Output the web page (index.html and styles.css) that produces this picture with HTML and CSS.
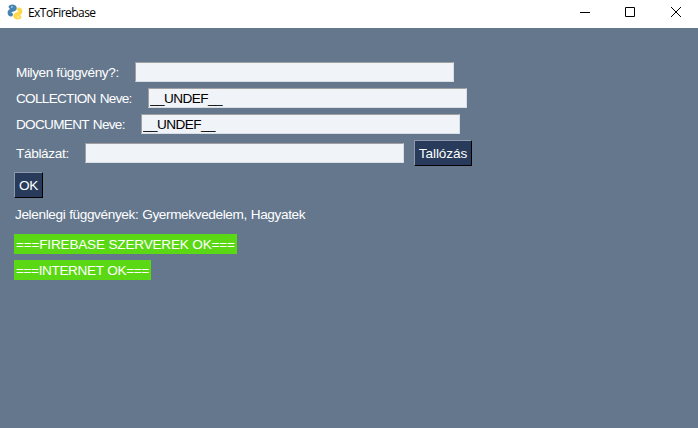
FILE: index.html
```
<!DOCTYPE html>
<html lang="hu">
<head>
<meta charset="utf-8">
<title>ExToFirebase</title>
<link rel="stylesheet" href="styles.css">
</head>
<body>
<header class="titlebar">
  <svg class="logo" width="16" height="16" viewBox="0 0 16 16">
    <g fill="none" stroke-linecap="round" stroke-linejoin="round" stroke-width="3.8">
      <path stroke="#4583b0" d="M3.5 2.9C5.2 2 8 2.4 7.8 4.5 7.6 6.4 2.4 5.7 2.5 8.4c0 1.4.8 2 1.6 2.2"/>
      <path stroke="#ffd84a" d="M12.5 13.1c-1.7.9-4.5.5-4.3-1.6.2-1.9 5.4-1.2 5.3-3.9 0-1.4-.8-2-1.6-2.2"/>
    </g>
    <circle cx="4.9" cy="3" r=".7" fill="#fff"/>
    <circle cx="11.1" cy="13" r=".7" fill="#fff"/>
  </svg>
  <h1 class="title">ExToFirebase</h1>
  <div class="controls">
    <svg width="46" height="24" viewBox="0 0 46 24"><path d="M18 12.5h10" stroke="#000"/></svg>
    <svg width="46" height="24" viewBox="0 0 46 24"><path d="M17.5 7.5h9v9h-9z" fill="none" stroke="#000"/></svg>
    <svg width="44" height="24" viewBox="0 0 44 24"><path d="M17 7l10 10M27 7L17 17" stroke="#000"/></svg>
  </div>
</header>
<main class="form">
  <div class="row"><label class="label function" for="f">Milyen függvény?:</label><input class="field" id="f"></div>
  <div class="row"><label class="label collection" for="c">COLLECTION Neve:</label><input class="field" id="c" value="__UNDEF__"></div>
  <div class="row"><label class="label document" for="d">DOCUMENT Neve:</label><input class="field" id="d" value="__UNDEF__"></div>
  <div class="row"><label class="label table" for="t">Táblázat:</label><input class="field" id="t"><button class="button browse">Tallózás</button></div>
  <div class="row"><button class="button ok">OK</button></div>
  <p class="functions">Jelenlegi függvények: Gyermekvedelem, Hagyatek</p>
  <p class="status firebase">===FIREBASE SZERVEREK OK===</p>
  <p class="status internet">===INTERNET OK===</p>
</main>
</body>
</html>
```
FILE: styles.css
```
* { box-sizing: border-box; }
body {
  margin: 0;
  height: 428px;
  overflow: hidden;
  background: #64778d;
  color: #fff;
  font: 13.6px/20px "Liberation Sans", Arial, sans-serif;
}
.titlebar {
  display: flex;
  height: 28px;
  padding: 0 0 4px 7px;
  align-items: center;
  background: #fff;
  color: #000;
}
.logo { flex: none; }
.title {
  margin: 2px 0 0 5px;
  font: 12px/16px "Open Sans", "Noto Sans", sans-serif;
  letter-spacing: -0.55px;
}
.controls { display: flex; margin-left: auto; }
.form {
  display: flex;
  flex-direction: column;
  align-items: flex-start;
  gap: 6px;
  padding: 34px 14px 0;
}
.row { display: flex; align-items: center; }
.label { padding: 1px 0 0 2px; height: 20px; white-space: nowrap; }
.function { width: 121px; letter-spacing: -0.4px; }
.collection { width: 134px; letter-spacing: -0.72px; word-spacing: 1px; }
.document { width: 127px; letter-spacing: -0.7px; word-spacing: 1px; }
.table { width: 71px; letter-spacing: -0.33px; }
.field {
  width: 319px;
  height: 20px;
  padding: 1px 1px 0;
  border: 1px solid;
  border-color: #a0a0a0 #d8dee6 #d8dee6 #a0a0a0;
  border-radius: 0;
  outline: 0;
  background: #f0f3f7;
  color: #000;
  font: inherit;
  letter-spacing: -0.55px;
}
.button {
  height: 26px;
  padding: 1px 0 0;
  border: 1px solid;
  border-color: #8f9bac #000 #000 #8f9bac;
  border-radius: 0;
  background: #283b5b;
  color: #fff;
  font: inherit;
}
.browse { width: 58px; margin-left: 10px; letter-spacing: -0.1px; }
.ok { width: 29px; letter-spacing: -0.4px; }
.functions { margin: 0 0 4px; padding-left: 1px; height: 20px; letter-spacing: -0.37px; word-spacing: 0.4px; white-space: nowrap; }
.functions, .status { line-height: 21px; }
.status { height: 20px; margin: 0; padding-left: 2px; background: #5bd814; white-space: nowrap; }
.firebase { width: 223px; letter-spacing: -0.2px; }
.internet { width: 137px; letter-spacing: -0.38px; word-spacing: 0.6px; }
```
